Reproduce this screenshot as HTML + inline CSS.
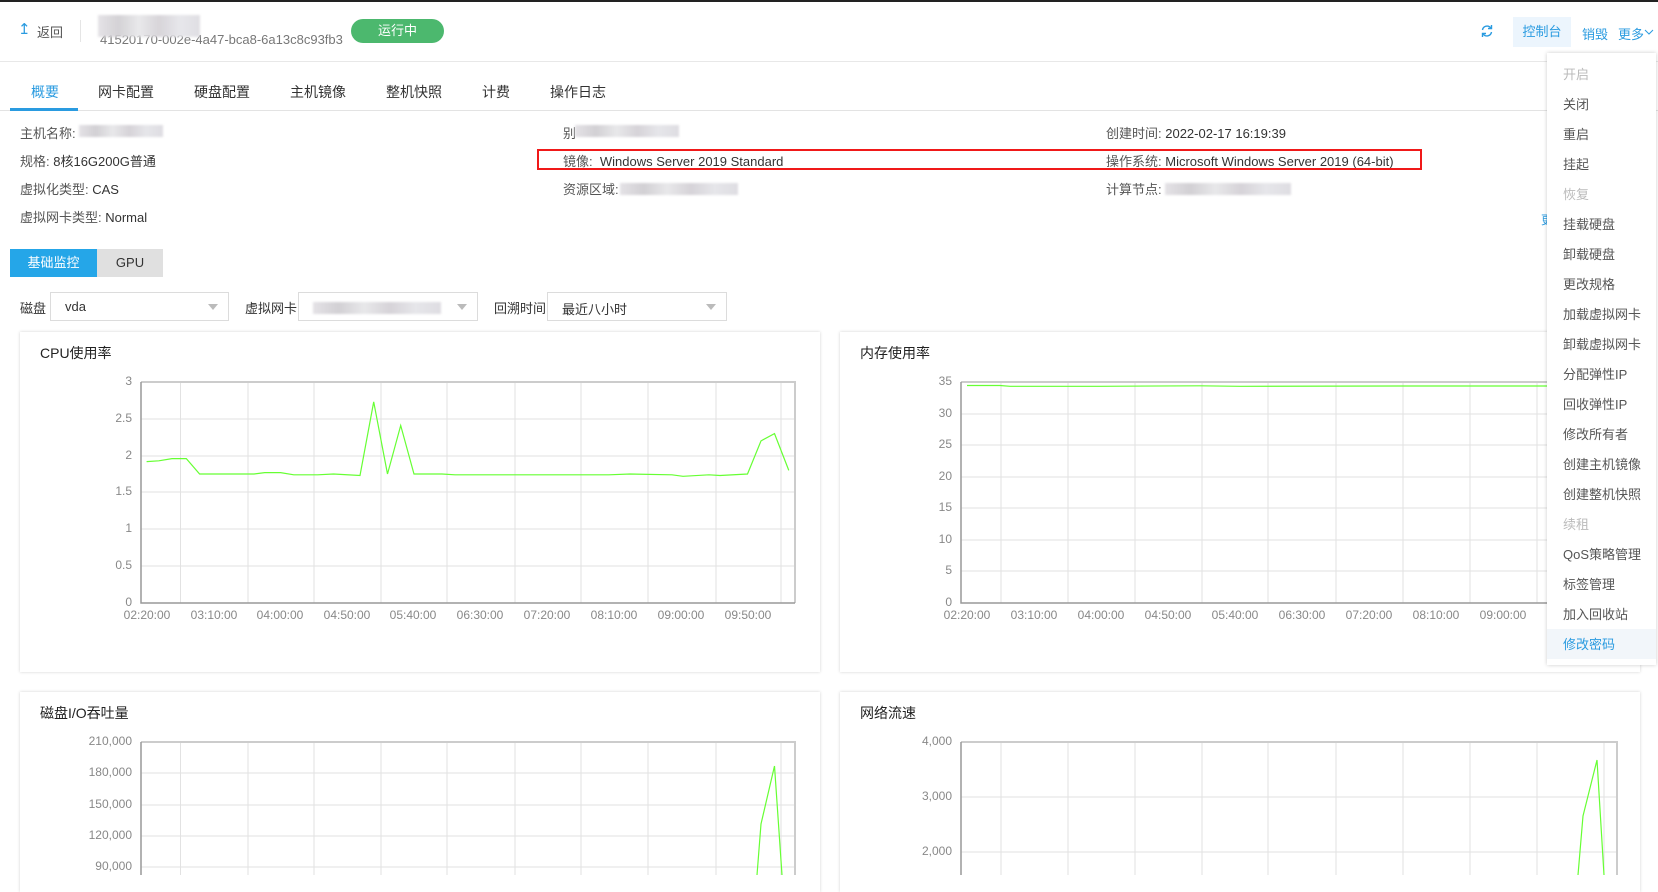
<!DOCTYPE html>
<html><head><meta charset="utf-8"><style>
*{margin:0;padding:0;box-sizing:border-box}
body{width:1658px;height:875px;overflow:hidden;background:#fff;font-family:"Liberation Sans","Noto Sans CJK SC",sans-serif;font-size:13px;color:#333;position:relative}
.a{position:absolute;white-space:nowrap}
.blur{position:absolute;background:linear-gradient(90deg,#e4e2e6,#d2d0d4 20%,#e8e8ea 40%,#d6d3d8 60%,#e6e6ea 80%,#dedde2);filter:blur(1px)}
.tab{position:absolute;top:82px;font-size:14px;color:#333}
.lbl{color:#555}
.sel{position:absolute;top:292px;height:29px;border:1px solid #dcdcdc;background:#fff}
.sel .tri{position:absolute;right:10px;top:11px;width:0;height:0;border-left:5px solid transparent;border-right:5px solid transparent;border-top:6px solid #bbb}
.card{position:absolute;background:#fff;box-shadow:0 0 3px rgba(0,0,0,.18)}
.dd{position:absolute;left:1547px;top:53px;width:109px;height:612px;background:#fff;box-shadow:0 0 4px rgba(0,0,0,.2)}
.dd div{position:absolute;left:16px;font-size:13px;color:#555}
.dd .dis{color:#bbb}
</style></head><body>
<div class="a" style="left:0;top:0;width:1658px;height:2px;background:#222"></div>
<div class="a" style="left:18px;top:20px;color:#2a9be0;font-size:15px">&#8613;</div>
<div class="a" style="left:37px;top:22px;color:#555">返回</div>
<div class="a" style="left:80px;top:20px;width:1px;height:22px;background:#e5e5e5"></div>
<div class="a" style="left:100px;top:32px;color:#777;font-size:13px">41520170-002e-4a47-bca8-6a13c8c93fb3</div>
<div class="blur" style="left:98px;top:15px;width:102px;height:22px;opacity:.95"></div>
<div class="a" style="left:351px;top:19px;width:93px;height:24px;border-radius:12px;background:#4cb86e;color:#fff;text-align:center;line-height:24px;font-size:13px">运行中</div>
<svg class="a" style="left:1480px;top:24px" width="14" height="14" viewBox="0 0 14 14"><path d="M2.5 6a4.6 4.6 0 0 1 8.3-2" fill="none" stroke="#2a9be0" stroke-width="1.4"/><path d="M11.5 8a4.6 4.6 0 0 1-8.3 2" fill="none" stroke="#2a9be0" stroke-width="1.4"/><path d="M11.5 1v3.5H8" fill="none" stroke="#2a9be0" stroke-width="1.4"/><path d="M2.5 13V9.5H6" fill="none" stroke="#2a9be0" stroke-width="1.4"/></svg>
<div class="a" style="left:1513px;top:17px;width:58px;height:30px;background:#ecf5fd;color:#2a9be0;text-align:center;line-height:30px">控制台</div>
<div class="a" style="left:1582px;top:24px;color:#2a9be0">销毁</div>
<div class="a" style="left:1618px;top:24px;color:#2a9be0">更多</div>
<svg class="a" style="left:1644px;top:28px" width="10" height="8"><path d="M1 2l4 4 4-4" fill="none" stroke="#2a9be0" stroke-width="1"/></svg>
<div class="a" style="left:0;top:61px;width:1658px;height:1px;background:#e8e8e8"></div>
<div class="tab" style="left:31px;color:#2a9be0">概要</div>
<div class="tab" style="left:98px">网卡配置</div>
<div class="tab" style="left:194px">硬盘配置</div>
<div class="tab" style="left:290px">主机镜像</div>
<div class="tab" style="left:386px">整机快照</div>
<div class="tab" style="left:482px">计费</div>
<div class="tab" style="left:550px">操作日志</div>
<div class="a" style="left:0;top:110px;width:1658px;height:1px;background:#e3e3e3"></div>
<div class="a" style="left:10px;top:108px;width:68px;height:3px;background:#2a9be0"></div>
<div class="a" style="left:20px;top:123px"><span class="lbl">主机名称:</span></div><div class="blur" style="left:79px;top:125px;width:84px;height:12px"></div>
<div class="a" style="left:20px;top:151px"><span class="lbl">规格:</span> 8核16G200G普通</div>
<div class="a" style="left:20px;top:179px"><span class="lbl">虚拟化类型:</span> CAS</div>
<div class="a" style="left:20px;top:207px"><span class="lbl">虚拟网卡类型:</span> Normal</div>
<div class="a" style="left:563px;top:123px"><span class="lbl">别</span></div><div class="blur" style="left:575px;top:125px;width:104px;height:12px"></div>
<div class="a" style="left:563px;top:151px"><span class="lbl">镜像:</span>&nbsp; Windows Server 2019 Standard</div>
<div class="a" style="left:563px;top:179px"><span class="lbl">资源区域:</span></div><div class="blur" style="left:620px;top:183px;width:118px;height:12px"></div>
<div class="a" style="left:1106px;top:123px"><span class="lbl">创建时间:</span> 2022-02-17 16:19:39</div>
<div class="a" style="left:1106px;top:151px"><span class="lbl">操作系统:</span> Microsoft Windows Server 2019 (64-bit)</div>
<div class="a" style="left:1106px;top:179px"><span class="lbl">计算节点:</span></div><div class="blur" style="left:1165px;top:183px;width:126px;height:12px"></div>
<div class="a" style="left:537px;top:149px;width:885px;height:21px;border:2px solid #f01919"></div>
<div class="a" style="left:1541px;top:211px;color:#2a9be0;font-size:12px">更</div>
<div class="a" style="left:10px;top:249px;width:87px;height:28px;background:#25a6e8;color:#fff;text-align:center;line-height:28px">基础监控</div>
<div class="a" style="left:97px;top:249px;width:66px;height:28px;background:#e0e0e0;color:#333;text-align:center;line-height:28px">GPU</div>
<div class="a" style="left:20px;top:298px">磁盘</div>
<div class="sel" style="left:50px;width:179px"><span class="a" style="left:14px;top:6px">vda</span><span class="tri"></span></div>
<div class="a" style="left:245px;top:298px">虚拟网卡</div>
<div class="sel" style="left:298px;width:180px"><div class="blur" style="left:14px;top:9px;width:128px;height:12px"></div><span class="tri"></span></div>
<div class="a" style="left:494px;top:298px">回溯时间</div>
<div class="sel" style="left:547px;width:180px"><span class="a" style="left:14px;top:6px">最近八小时</span><span class="tri"></span></div>
<div class="card" style="left:20px;top:332px;width:800px;height:340px"></div>
<div class="card" style="left:840px;top:332px;width:800px;height:340px"></div>
<div class="card" style="left:20px;top:692px;width:800px;height:200px"></div>
<div class="card" style="left:840px;top:692px;width:800px;height:200px"></div>
<div class="a" style="left:40px;top:343px;font-size:14px;color:#222">CPU使用率</div>
<div class="a" style="left:860px;top:343px;font-size:14px;color:#222">内存使用率</div>
<div class="a" style="left:40px;top:703px;font-size:14px;color:#222">磁盘I/O吞吐量</div>
<div class="a" style="left:860px;top:703px;font-size:14px;color:#222">网络流速</div>
<svg class="a" style="left:0;top:0" width="1658" height="875" font-family="Liberation Sans, sans-serif" font-size="12" fill="#888">
<g stroke="#e2e2e2" stroke-width="1">
<path d="M141 382H795M141 419H795M141 456H795M141 492H795M141 529H795M141 566H795"/>
<path d="M180.5 382V603M248 382V603M314 382V603M381 382V603M447 382V603M515 382V603M581 382V603M648 382V603M716 382V603M781 382V603"/>
<path d="M961 414H1617M961 445H1617M961 477H1617M961 508H1617M961 540H1617M961 571H1617"/>
<path d="M1001 382V603M1068 382V603M1135 382V603M1202 382V603M1268 382V603M1336 382V603M1403 382V603M1470 382V603M1537 382V603M1604 382V603"/>
<path d="M141 773H795M141 805H795M141 836H795M141 867H795"/>
<path d="M180.5 742V875M248 742V875M314 742V875M381 742V875M447 742V875M515 742V875M581 742V875M648 742V875M716 742V875M781 742V875"/>
<path d="M961 797H1617M961 852H1617"/>
<path d="M1001 742V875M1068 742V875M1135 742V875M1202 742V875M1268 742V875M1336 742V875M1403 742V875M1470 742V875M1537 742V875M1604 742V875"/>
</g>
<g stroke="#ccc" stroke-width="2" fill="none">
<path d="M141 382H795V603M961 382H1617V603M141 742H795V875M961 742H1617V875"/>
</g>
<g stroke="#999" stroke-width="1.5" fill="none">
<path d="M141 382V603H795M961 382V603H1617M141 742V875M961 742V875"/>
</g>
<g text-anchor="end">
<text x="132" y="385">3</text><text x="132" y="422">2.5</text><text x="132" y="459">2</text><text x="132" y="495">1.5</text><text x="132" y="532">1</text><text x="132" y="569">0.5</text><text x="132" y="606">0</text>
<text x="952" y="385">35</text><text x="952" y="417">30</text><text x="952" y="448">25</text><text x="952" y="480">20</text><text x="952" y="511">15</text><text x="952" y="543">10</text><text x="952" y="574">5</text><text x="952" y="606">0</text>
<text x="132" y="745">210,000</text><text x="132" y="776">180,000</text><text x="132" y="808">150,000</text><text x="132" y="839">120,000</text><text x="132" y="870">90,000</text>
<text x="952" y="745">4,000</text><text x="952" y="800">3,000</text><text x="952" y="855">2,000</text>
</g>
<g text-anchor="middle">
<text x="147" y="619">02:20:00</text><text x="214" y="619">03:10:00</text><text x="280" y="619">04:00:00</text><text x="347" y="619">04:50:00</text><text x="413" y="619">05:40:00</text><text x="480" y="619">06:30:00</text><text x="547" y="619">07:20:00</text><text x="614" y="619">08:10:00</text><text x="681" y="619">09:00:00</text><text x="748" y="619">09:50:00</text>
<text x="967" y="619">02:20:00</text><text x="1034" y="619">03:10:00</text><text x="1101" y="619">04:00:00</text><text x="1168" y="619">04:50:00</text><text x="1235" y="619">05:40:00</text><text x="1302" y="619">06:30:00</text><text x="1369" y="619">07:20:00</text><text x="1436" y="619">08:10:00</text><text x="1503" y="619">09:00:00</text><text x="1570" y="619">09:50:00</text>
</g>
<g stroke="#66ff33" stroke-width="1.2" fill="none">
<polyline points="146.6,461.6 158.8,460.8 172,458.6 186.3,458.6 199.6,474 254,474 264.7,472.6 280.6,472.6 293.8,474.8 317.6,474.8 333.5,474 360,475.5 373.7,401.9 387.5,474 400.7,425.5 414,474 442,474 455,474.8 608.8,474.8 630,474 672,474.8 683,476.3 709,474.8 720,475.5 747.5,474 761,440.9 774.5,433.6 788.8,470.4"/>
<polyline points="967,385.5 1000,385.5 1010,386.3 1100,386.3 1200,385.8 1240,386.3 1400,386 1617,386"/>
<polyline points="757,875 761,824 774.5,766 782,875"/>
<polyline points="1578,875 1583,816 1597,760 1604,875"/>
</g>
</svg>
<div class="dd">
<div class="dis" style="top:11px">开启</div>
<div style="top:41px">关闭</div>
<div style="top:71px">重启</div>
<div style="top:101px">挂起</div>
<div class="dis" style="top:131px">恢复</div>
<div style="top:161px">挂载硬盘</div>
<div style="top:191px">卸载硬盘</div>
<div style="top:221px">更改规格</div>
<div style="top:251px">加载虚拟网卡</div>
<div style="top:281px">卸载虚拟网卡</div>
<div style="top:311px">分配弹性IP</div>
<div style="top:341px">回收弹性IP</div>
<div style="top:371px">修改所有者</div>
<div style="top:401px">创建主机镜像</div>
<div style="top:431px">创建整机快照</div>
<div class="dis" style="top:461px">续租</div>
<div style="top:491px">QoS策略管理</div>
<div style="top:521px">标签管理</div>
<div style="top:551px">加入回收站</div>
<div style="left:0;top:576px;width:109px;height:30px;background:#f2f6fa"></div>
<div style="top:581px;color:#2a9be0">修改密码</div>
</div>
</body></html>
